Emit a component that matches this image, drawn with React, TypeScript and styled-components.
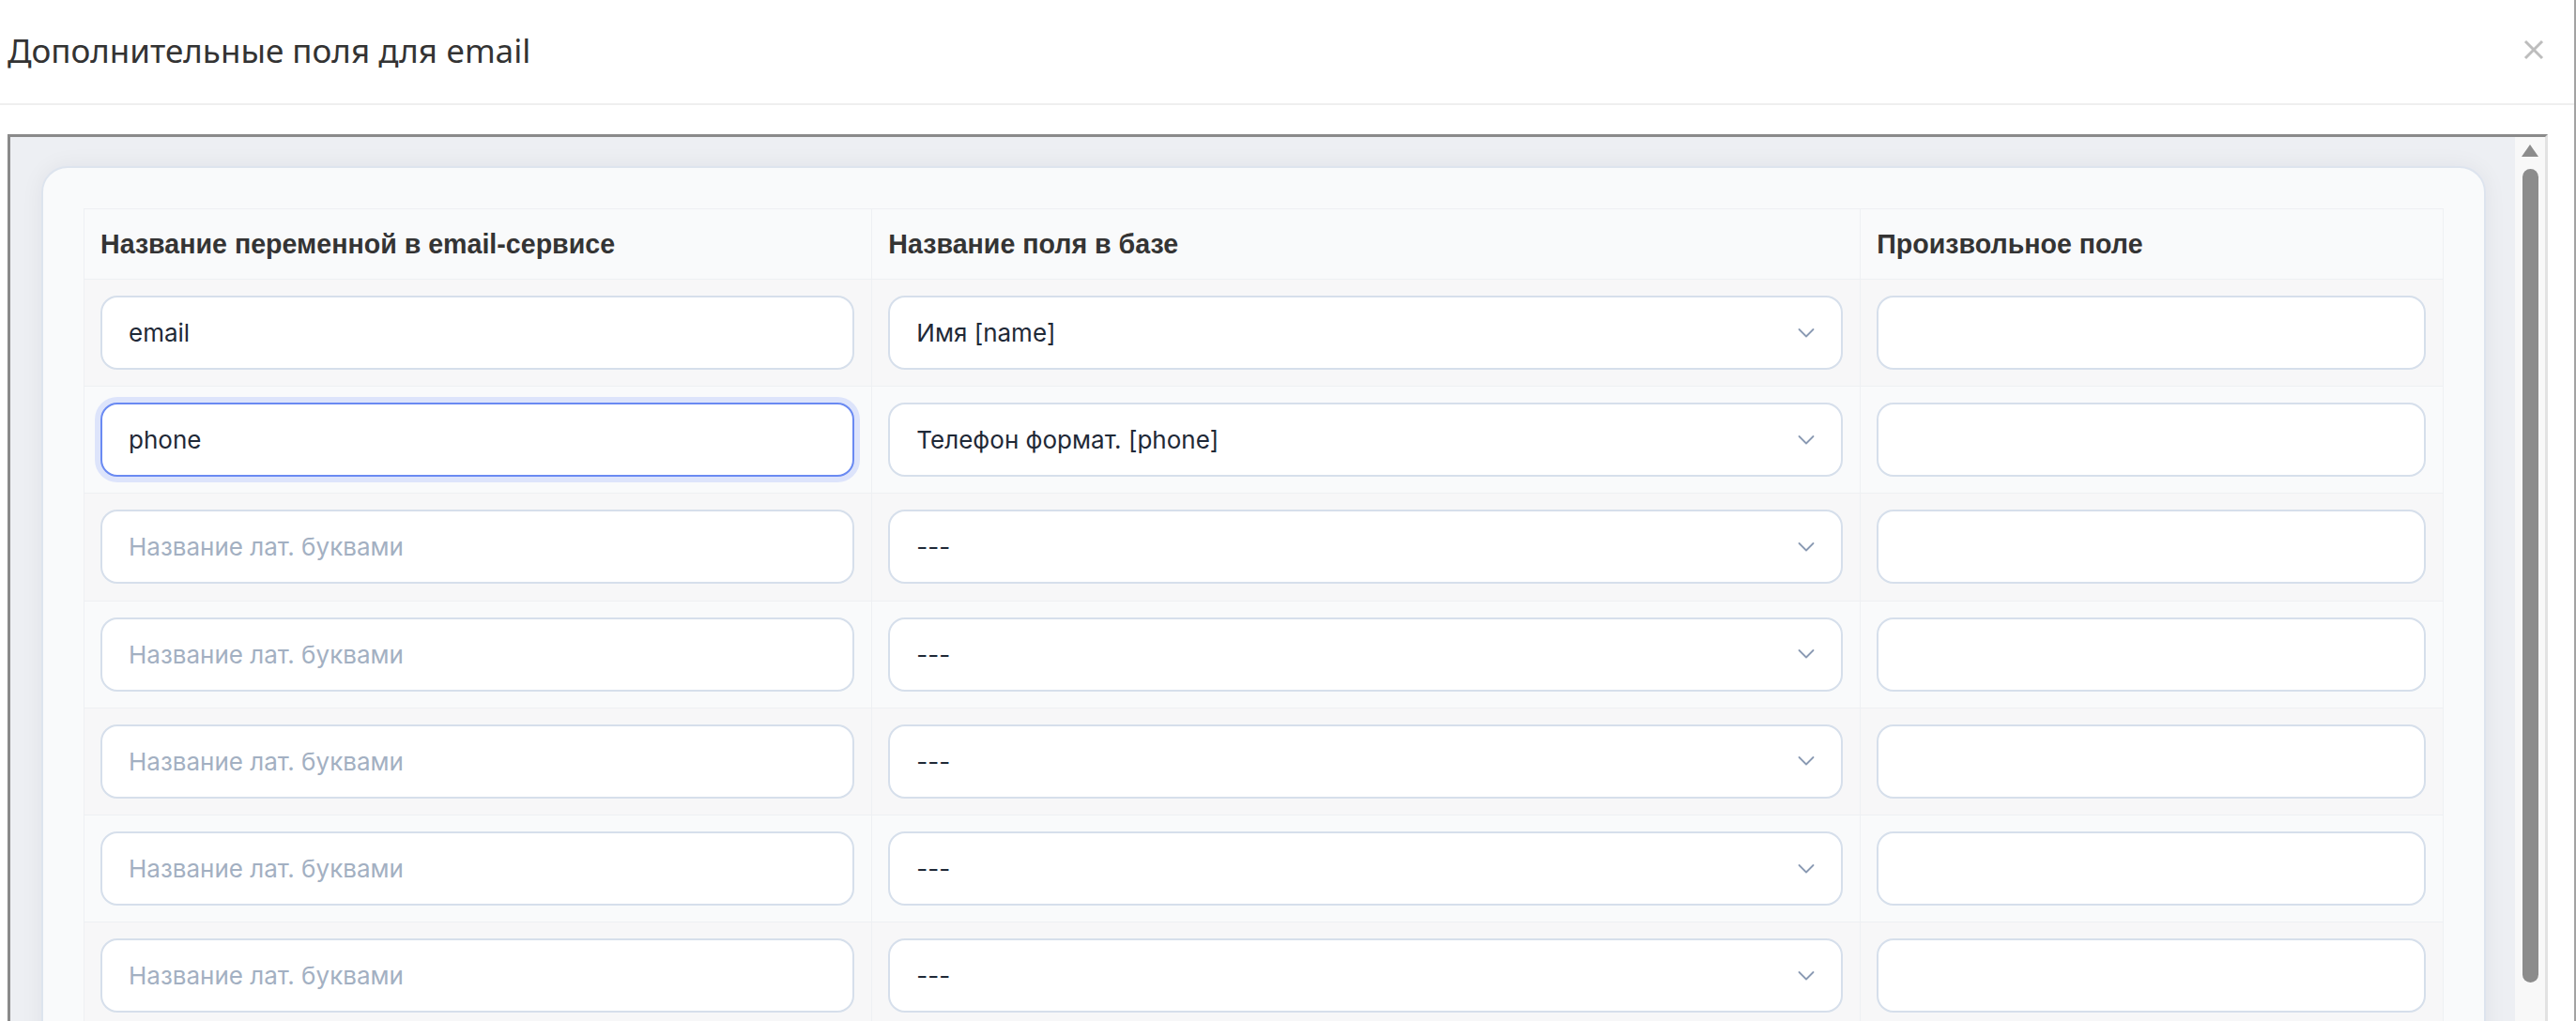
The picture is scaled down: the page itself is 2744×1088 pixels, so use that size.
import React from "react";
import styled, { createGlobalStyle } from "styled-components";

const GlobalStyle = createGlobalStyle`
  html, body {
    margin: 0;
    padding: 0;
    background: #ffffff;
    overflow: hidden;
  }
  body {
    font-family: Inter, "Noto Sans", sans-serif;
  }
  * {
    box-sizing: border-box;
  }
`;

type Row = {
  name: string;
  field: string;
  custom: string;
};

const FIELD_OPTIONS = ["---", "Имя [name]", "Телефон формат. [phone]", "Email [email]"];

const ROWS: Row[] = [
  { name: "email", field: "Имя [name]", custom: "" },
  { name: "phone", field: "Телефон формат. [phone]", custom: "" },
  { name: "", field: "---", custom: "" },
  { name: "", field: "---", custom: "" },
  { name: "", field: "---", custom: "" },
  { name: "", field: "---", custom: "" },
  { name: "", field: "---", custom: "" },
];

const ChevronIcon = () => (
  <svg width="18" height="11" viewBox="0 0 18 11" fill="none">
    <polyline points="1.5,1.5 9,9 16.5,1.5" stroke="#8a9ab3" strokeWidth="1.8" strokeLinecap="round" strokeLinejoin="round" />
  </svg>
);

const CloseIcon = () => (
  <svg width="22" height="22" viewBox="0 0 22 22" fill="none">
    <line x1="2" y1="2" x2="20" y2="20" stroke="#bdbdbd" strokeWidth="3" />
    <line x1="20" y1="2" x2="2" y2="20" stroke="#bdbdbd" strokeWidth="3" />
  </svg>
);

const App = () => {
  return (
    <>
      <GlobalStyle />
      <Modal>
        <ModalHeader>
          <ModalTitle>Дополнительные поля для email</ModalTitle>
          <CloseButton type="button" aria-label="Закрыть">
            <CloseIcon />
          </CloseButton>
        </ModalHeader>
        <ModalBody>
          <Frame>
            <Viewport>
              <Card>
                <FieldsTable>
                  <colgroup>
                    <col style={{ width: "33.4%" }} />
                    <col style={{ width: "41.9%" }} />
                    <col style={{ width: "24.7%" }} />
                  </colgroup>
                  <thead>
                    <tr>
                      <HeadCell>Название переменной в email-сервисе</HeadCell>
                      <HeadCell>Название поля в базе</HeadCell>
                      <HeadCell>Произвольное поле</HeadCell>
                    </tr>
                  </thead>
                  <tbody>
                    {ROWS.map((row, i) => (
                      <BodyRow key={i} $odd={i % 2 === 0}>
                        <Cell>
                          <TextInput
                            defaultValue={row.name}
                            placeholder="Название лат. буквами"
                            $focused={i === 1}
                          />
                        </Cell>
                        <Cell>
                          <SelectWrap>
                            <Select defaultValue={row.field}>
                              {FIELD_OPTIONS.map((opt) => (
                                <option key={opt} value={opt}>
                                  {opt}
                                </option>
                              ))}
                            </Select>
                            <Chevron>
                              <ChevronIcon />
                            </Chevron>
                          </SelectWrap>
                        </Cell>
                        <Cell>
                          <TextInput defaultValue={row.custom} />
                        </Cell>
                      </BodyRow>
                    ))}
                  </tbody>
                </FieldsTable>
              </Card>
            </Viewport>
            <ScrollTrack>
              <ScrollArrow />
              <ScrollThumb />
            </ScrollTrack>
          </Frame>
        </ModalBody>
      </Modal>
    </>
  );
};

const Modal = styled.div`
  display: flex;
  flex-direction: column;
  width: 100%;
  height: 1088px;
  border-right: 2px solid #a3a3a3;
  background: #ffffff;
`;

const ModalHeader = styled.div`
  display: flex;
  align-items: center;
  justify-content: space-between;
  height: 112px;
  padding: 0 32px 4px 8px;
  border-bottom: 2px solid #efefef;
  flex-shrink: 0;
`;

const ModalTitle = styled.h4`
  margin: 0;
  font-family: "Noto Sans", "Open Sans", sans-serif;
  font-size: 35px;
  font-weight: 400;
  color: #333333;
`;

const CloseButton = styled.button`
  display: flex;
  align-items: center;
  justify-content: center;
  padding: 0;
  border: none;
  background: transparent;
  cursor: pointer;
`;

const ModalBody = styled.div`
  flex: 1;
  min-height: 0;
  padding: 31px 28px 0 8px;
`;

const Frame = styled.div`
  display: flex;
  height: 1000px;
  border-style: solid;
  border-width: 3px;
  border-color: #8a8a8a #e2e2e2 #e2e2e2 #8a8a8a;
  overflow: hidden;
`;

const Viewport = styled.div`
  flex: 1;
  min-width: 0;
  padding: 31px 31px 0 33px;
  background: #edeff3;
  overflow: hidden;
`;

const Card = styled.div`
  padding: 43px;
  background: #f9fafb;
  border: 2px solid #dde4ee;
  border-radius: 28px;
  box-shadow: 0 0 24px rgba(30, 41, 59, 0.06);
`;

const FieldsTable = styled.table`
  width: 100%;
  table-layout: fixed;
  border-collapse: collapse;
`;

const HeadCell = styled.th`
  height: 75px;
  padding: 0 18px 0 17px;
  text-align: left;
  font-family: "Liberation Sans", Arial, sans-serif;
  font-size: 28.6px;
  font-weight: 700;
  color: #343434;
  background: #f9fafb;
  border: 1.5px solid #eef0f3;
`;

const BodyRow = styled.tr<{ $odd: boolean }>`
  background: ${({ $odd }) => ($odd ? "#f7f7f8" : "#f9fafb")};
`;

const Cell = styled.td`
  height: 114.2px;
  padding: 0 18px 0 17px;
  border: 1.5px solid #eef0f3;
  vertical-align: middle;
`;

const fieldBase = `
  display: block;
  width: 100%;
  height: 79px;
  padding: 0 28px;
  font-family: Inter, "Noto Sans", sans-serif;
  font-size: 26px;
  color: #1f2937;
  background: #ffffff;
  border: 2px solid #d6dfeb;
  border-radius: 18px;
  outline: none;
`;

const TextInput = styled.input<{ $focused?: boolean }>`
  ${fieldBase}
  border-color: ${({ $focused }) => ($focused ? "#6a8af2" : "#d6dfeb")};
  box-shadow: ${({ $focused }) => ($focused ? "0 0 0 6px #dde4fb" : "none")};

  &::placeholder {
    color: #a3b0c2;
  }
`;

const SelectWrap = styled.div`
  position: relative;
`;

const Select = styled.select`
  ${fieldBase}
  padding-right: 70px;
  appearance: none;
  -webkit-appearance: none;
  cursor: pointer;
`;

const Chevron = styled.span`
  position: absolute;
  top: 50%;
  right: 30px;
  display: flex;
  transform: translateY(-50%);
  pointer-events: none;
`;

const ScrollTrack = styled.div`
  display: flex;
  flex-direction: column;
  align-items: center;
  width: 32px;
  flex-shrink: 0;
  padding-top: 8px;
  background: #f8f8f8;
`;

const ScrollArrow = styled.div`
  width: 0;
  height: 0;
  border-left: 9px solid transparent;
  border-right: 9px solid transparent;
  border-bottom: 13px solid #8c8c8c;
`;

const ScrollThumb = styled.div`
  width: 17px;
  height: 867px;
  margin-top: 13px;
  border-radius: 9px;
  background: #8c8c8c;
`;

export default App;
